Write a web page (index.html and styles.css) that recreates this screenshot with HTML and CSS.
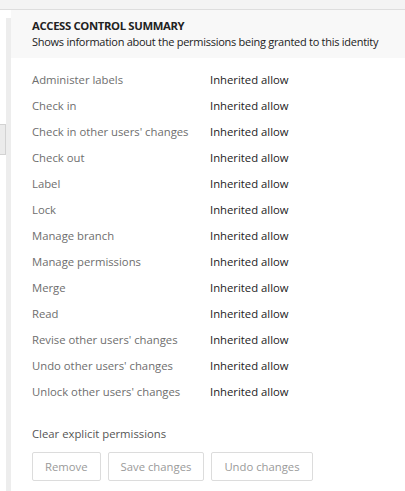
FILE: index.html
```html
<!DOCTYPE html>
<html>
<head>
<meta charset="utf-8">
<link rel="stylesheet" href="styles.css">
</head>
<body>
<div class="topbar"></div>
<div class="main">
  <div class="side">
    <div class="tab"></div>
  </div>
  <div class="rail"></div>
  <div class="content">
    <div class="header">
      <div class="title">ACCESS CONTROL SUMMARY</div>
      <div class="subtitle">Shows information about the permissions being granted to this identity</div>
    </div>
    <div class="perms">
      <div class="row"><span class="label">Administer labels</span><span class="value">Inherited allow</span></div>
      <div class="row"><span class="label">Check in</span><span class="value">Inherited allow</span></div>
      <div class="row"><span class="label">Check in other users' changes</span><span class="value">Inherited allow</span></div>
      <div class="row"><span class="label">Check out</span><span class="value">Inherited allow</span></div>
      <div class="row"><span class="label">Label</span><span class="value">Inherited allow</span></div>
      <div class="row"><span class="label">Lock</span><span class="value">Inherited allow</span></div>
      <div class="row"><span class="label">Manage branch</span><span class="value">Inherited allow</span></div>
      <div class="row"><span class="label">Manage permissions</span><span class="value">Inherited allow</span></div>
      <div class="row"><span class="label">Merge</span><span class="value">Inherited allow</span></div>
      <div class="row"><span class="label">Read</span><span class="value">Inherited allow</span></div>
      <div class="row"><span class="label">Revise other users' changes</span><span class="value">Inherited allow</span></div>
      <div class="row"><span class="label">Undo other users' changes</span><span class="value">Inherited allow</span></div>
      <div class="row"><span class="label">Unlock other users' changes</span><span class="value">Inherited allow</span></div>
    </div>
    <div class="clear">Clear explicit permissions</div>
    <div class="buttons">
      <button class="btn">Remove</button>
      <button class="btn">Save changes</button>
      <button class="btn">Undo changes</button>
    </div>
  </div>
</div>
</body>
</html>
```

FILE: styles.css
```css
html, body {
  margin: 0;
  padding: 0;
  background: #ffffff;
  font-family: "Open Sans", "Noto Sans", sans-serif;
  font-size: 11.3px;
  color: #222;
  overflow: hidden;
  height: 491px;
}
.topbar {
  height: 9px;
  background: #f4f4f4;
  border-bottom: 1px solid #dedede;
}
.main {
  display: flex;
  height: 481px;
}
.side {
  width: 6px;
  background: #fff;
  padding-top: 114px;
}
.tab {
  width: 5px;
  height: 29px;
  background: #ebebeb;
  border: 1px solid #d2d2d2;
  border-left: none;
}
.rail {
  width: 5px;
  margin-top: 8px;
  background: #ededed;
}
.content {
  flex: 1;
  display: flex;
  flex-direction: column;
}
.header {
  background: #f8f8f8;
  padding: 8px 0 0 21px;
  height: 40px;
}
.title {
  font-weight: 700;
  font-size: 11.3px;
  line-height: 16px;
  letter-spacing: -0.35px;
  color: #222;
}
.subtitle {
  font-size: 11px;
  line-height: 15px;
  letter-spacing: -0.27px;
  white-space: nowrap;
  color: #222;
}
.perms {
  padding: 8px 0 0 21px;
}
.row {
  display: flex;
  height: 26px;
  align-items: center;
}
.label {
  width: 178px;
  color: #6e6e6e;
}
.value {
  color: #222;
}
.clear {
  padding: 22px 0 0 21px;
  line-height: 16px;
  color: #555;
}
.buttons {
  display: flex;
  gap: 7px;
  padding: 10px 0 0 21px;
}
.btn {
  font-family: inherit;
  font-size: 11.3px;
  color: #9a9a9a;
  background: #fff;
  border: 1px solid #dcdcdc;
  border-radius: 2px;
  height: 29px;
  padding: 0 12px;
}
```
